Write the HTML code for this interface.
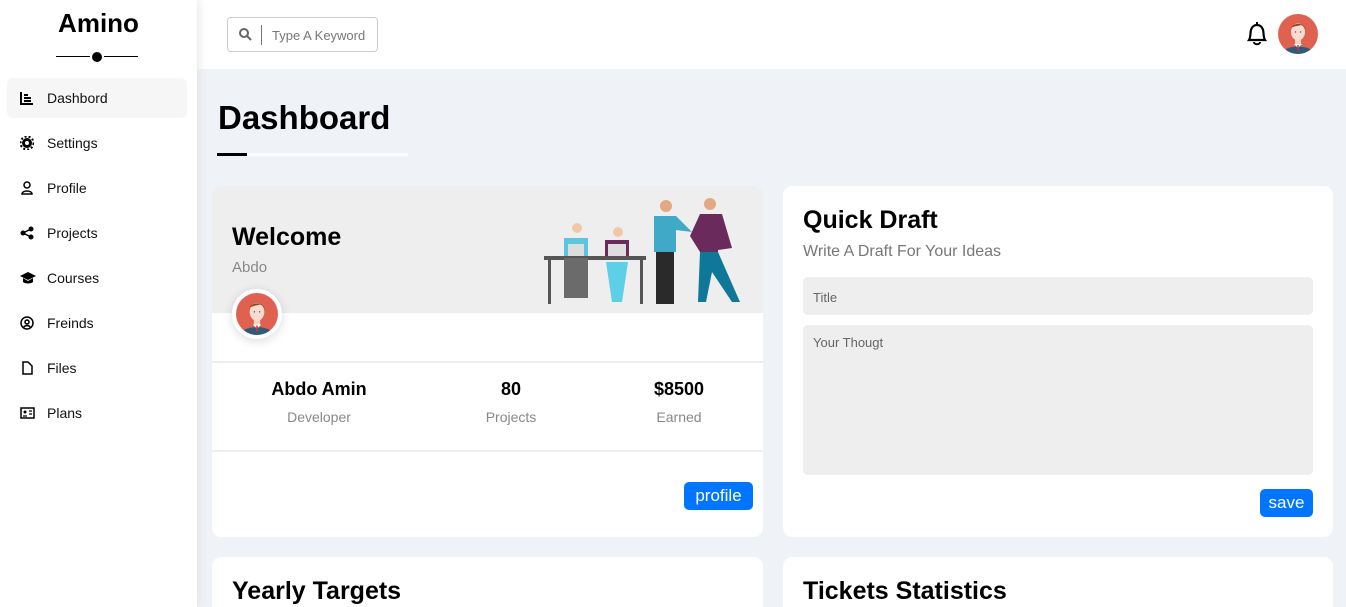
<!DOCTYPE html>
<html><head><meta charset="utf-8"><style>
*{box-sizing:border-box;margin:0;padding:0}
html,body{width:1346px;height:607px;overflow:hidden}
body{background:#eff2f7;font-family:"Liberation Sans",sans-serif;position:relative}
.side{position:absolute;left:0;top:0;width:197px;height:607px;background:#fff;box-shadow:0 0 10px #ddd;z-index:2}
.logo{position:absolute;left:0;width:197px;top:8px;text-align:center;font-weight:bold;font-size:26px}
.ln{position:absolute;top:56px;height:1px;background:#000;width:34px}
.dot{position:absolute;left:92px;top:52px;width:10px;height:10px;border-radius:50%;background:#000}
.item{position:absolute;left:7px;width:180px;height:40px;border-radius:6px;font-size:14px;line-height:40px;padding-left:40px;color:#111}
.item.a{background:#f6f6f6}
.item svg{position:absolute;left:13px;top:13px}
.head{position:absolute;left:197px;top:0;right:0;height:69px;background:#fff}
.search{position:absolute;left:30px;top:17px;width:151px;height:35px;border:1px solid #ccc;border-radius:4px;font-size:13px;color:#777;line-height:35px;padding-left:44px}
.search .bar{position:absolute;left:33px;top:7px;width:1px;height:20px;background:#777}
h1{position:absolute;left:218px;top:99px;font-size:33px;font-weight:bold}
.card{position:absolute;background:#fff;border-radius:9px;overflow:hidden}
.btn{position:absolute;background:#0075ff;color:#fff;border-radius:5px;font-size:17px;text-align:center}
.stat{position:absolute;top:379px;text-align:center;width:160px}
.stat b{display:block;font-size:18px}
.stat span{display:block;font-size:14px;color:#888;margin-top:9px}
</style></head><body>
<svg width="0" height="0" style="position:absolute"><defs><symbol id="av" viewBox="0 0 40 40"><clipPath id="c1"><circle cx="20" cy="20" r="20"/></clipPath><circle cx="20" cy="20" r="20" fill="#e0614f"/><g clip-path="url(#c1)"><path d="M4 40C6 30 34 30 36 40Z" fill="#2f5a78"/><path d="M16 30L24 30L20 34Z" fill="#fff"/><rect x="17" y="23" width="6" height="7" fill="#f5d0c0"/><ellipse cx="20" cy="18" rx="7" ry="8.5" fill="#fadbd0"/><path d="M12.5 17C12 8 28 7 27.5 17C27 13 25 12 23 11C20 12 16 12 13 14Z" fill="#8a4a25"/><circle cx="17.5" cy="18" r=".7" fill="#555"/><circle cx="22.5" cy="18" r=".7" fill="#555"/><path d="M19.3 31L20.7 31L21 36L20 37L19 36Z" fill="#c33"/></g></symbol></defs></svg>
<div class="side">
<div class="logo">Amino</div>
<div class="ln" style="left:56px"></div><div class="ln" style="left:104px"></div><div class="dot"></div>
<div class="item a" style="top:78px"><svg width="14" height="14"><path d="M1 1V13H13M4 4H8M4 7H11M4 10H11" stroke="#000" stroke-width="2" fill="none"/></svg>Dashbord</div>
<div class="item" style="top:123px"><svg width="14" height="14"><circle cx="7" cy="7" r="5" fill="#000"/><circle cx="7" cy="7" r="6.5" fill="none" stroke="#000" stroke-width="2" stroke-dasharray="2 2"/><circle cx="7" cy="7" r="2" fill="#fff"/></svg>Settings</div>
<div class="item" style="top:168px"><svg width="14" height="14"><circle cx="7" cy="4" r="3" fill="none" stroke="#000" stroke-width="1.5"/><path d="M2 13C2 9 12 9 12 13Z" fill="none" stroke="#000" stroke-width="1.5"/></svg>Profile</div>
<div class="item" style="top:213px"><svg width="14" height="14"><circle cx="3" cy="7" r="2.5"/><circle cx="11" cy="3" r="2.5"/><circle cx="11" cy="11" r="2.5"/><path d="M3 7L11 3M3 7L11 11" stroke="#000" stroke-width="1.5"/></svg>Projects</div>
<div class="item" style="top:258px"><svg width="16" height="14"><path d="M0 5L8 1L16 5L8 9Z"/><path d="M3 7V11C5 13 11 13 13 11V7L8 10Z"/></svg>Courses</div>
<div class="item" style="top:303px"><svg width="14" height="14"><circle cx="7" cy="7" r="6" fill="none" stroke="#000" stroke-width="1.5"/><circle cx="7" cy="6" r="2" fill="none" stroke="#000" stroke-width="1.5"/><path d="M3.5 11.5C5 9 9 9 10.5 11.5" fill="none" stroke="#000" stroke-width="1.5"/></svg>Freinds</div>
<div class="item" style="top:348px"><svg width="14" height="14"><path d="M3 1H8L12 5V13H3Z" fill="none" stroke="#000" stroke-width="1.5"/></svg>Files</div>
<div class="item" style="top:393px"><svg width="15" height="14"><rect x="1" y="2" width="13" height="10" fill="none" stroke="#000" stroke-width="1.5"/><circle cx="5" cy="6" r="1.5"/><path d="M3 10H7M9 5H12M9 8H12" stroke="#000" stroke-width="1.3"/></svg>Plans</div>
</div>
<div class="head">
<div class="search"><svg style="position:absolute;left:11px;top:10px" width="13" height="13"><circle cx="5" cy="5" r="4" fill="none" stroke="#666" stroke-width="2"/><path d="M8 8L12 12" stroke="#666" stroke-width="2"/></svg><div class="bar"></div>Type A Keyword</div>
<svg style="position:absolute;left:1048px;top:21px" width="24" height="26"><path d="M4 19C6 16 5 12 6 9C7 5 10 4 12 4C14 4 17 5 18 9C19 12 18 16 20 19Z" fill="none" stroke="#000" stroke-width="2.2"/><path d="M12 1V4M9 21C9 24 15 24 15 21" fill="none" stroke="#000" stroke-width="2"/></svg>
<svg style="position:absolute;left:1081px;top:14px" width="40" height="40"><use href="#av"/></svg>
</div>
<h1>Dashboard</h1>
<div style="position:absolute;left:217px;top:153px;width:191px;height:3px;background:#fff"></div>
<div style="position:absolute;left:217px;top:153px;width:30px;height:3px;background:#000"></div>

<div class="card" style="left:212px;top:186px;width:551px;height:351px">
<div style="height:127px;background:#eee"></div>
<div style="position:absolute;left:20px;top:37px;font-size:25px;font-weight:bold">Welcome</div>
<div style="position:absolute;left:20px;top:73px;font-size:15px;color:#888">Abdo</div>
<svg style="position:absolute;left:330px;top:6px" width="205" height="112" viewBox="0 0 205 112">
<rect x="2" y="64" width="102" height="4" fill="#555"/><rect x="6" y="68" width="3" height="44" fill="#555"/><rect x="98" y="68" width="3" height="44" fill="#555"/>
<circle cx="35" cy="36" r="5" fill="#f2c7a8"/><rect x="22" y="46" width="24" height="18" fill="#5bc6de"/><rect x="26" y="52" width="16" height="12" fill="#ddd"/><rect x="22" y="66" width="24" height="40" fill="#6b6b6b"/>
<circle cx="76" cy="40" r="5" fill="#f2c7a8"/><rect x="63" y="48" width="24" height="16" fill="#6b2a5c"/><rect x="66" y="52" width="18" height="12" fill="#ddd"/><path d="M64 70L86 70L80 110L70 110Z" fill="#5dd0e8"/>
<circle cx="124" cy="14" r="6" fill="#e4a883"/><path d="M112 24L134 24L150 40L134 38L134 60L112 60Z" fill="#3fa9c7"/><rect x="114" y="60" width="18" height="52" fill="#2a2a2a"/>
<circle cx="168" cy="12" r="6" fill="#e4a883"/><path d="M158 22L180 22L190 56L176 58L176 60L158 60L148 44Z" fill="#6b2a5c"/><path d="M158 60L176 60L198 110L190 110L170 80L164 110L156 110Z" fill="#0f7798"/>
</svg>
<div style="position:absolute;left:20px;top:103px;width:50px;height:50px;border-radius:50%;background:#fff;box-shadow:0 2px 10px rgba(0,0,0,.15)"><svg style="position:absolute;left:4px;top:4px" width="42" height="42"><use href="#av"/></svg></div>
<div style="position:absolute;left:0;right:0;top:175px;height:2px;background:#eee"></div>
<div style="position:absolute;left:0;right:0;top:264px;height:2px;background:#eee"></div>
<div class="btn" style="left:472px;top:296px;width:69px;height:28px;line-height:28px">profile</div>
</div>
<div class="stat" style="left:239px"><b>Abdo Amin</b><span>Developer</span></div>
<div class="stat" style="left:431px"><b>80</b><span>Projects</span></div>
<div class="stat" style="left:599px"><b>$8500</b><span>Earned</span></div>

<div class="card" style="left:783px;top:186px;width:550px;height:351px">
<div style="position:absolute;left:20px;top:20px;font-size:25px;font-weight:bold">Quick Draft</div>
<div style="position:absolute;left:20px;top:57px;font-size:16px;color:#777">Write A Draft For Your Ideas</div>
<div style="position:absolute;left:20px;top:91px;width:510px;height:38px;background:#eee;border-radius:5px;font-size:13px;color:#666;padding:13px 10px">Title</div>
<div style="position:absolute;left:20px;top:139px;width:510px;height:150px;background:#eee;border-radius:5px;font-size:13px;color:#666;padding:10px">Your Thougt</div>
<div class="btn" style="left:477px;top:303px;width:53px;height:28px;line-height:28px">save</div>
</div>

<div class="card" style="left:212px;top:557px;width:551px;height:60px"><div style="position:absolute;left:20px;top:20px;font-size:25px;font-weight:bold">Yearly Targets</div></div>
<div class="card" style="left:783px;top:557px;width:550px;height:60px"><div style="position:absolute;left:20px;top:20px;font-size:25px;font-weight:bold">Tickets Statistics</div></div>
</body></html>
